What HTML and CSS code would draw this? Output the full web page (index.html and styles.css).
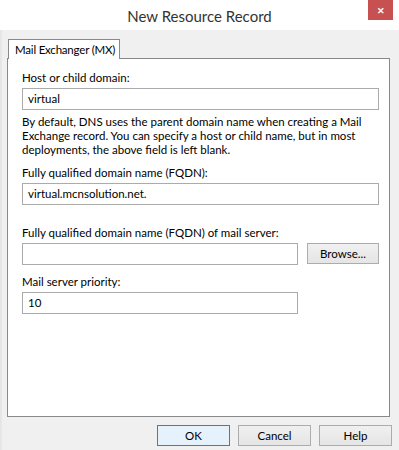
FILE: index.html
```html
<!DOCTYPE html>
<html lang="en">
    <head>
        <meta charset="UTF-8">
        <title>New Resource Record</title>
        <link rel="stylesheet" href="styles.css">
    </head>
    <body>
        <div class="window">
            <div class="titlebar">
                <span class="title">New Resource Record</span>
                <span class="close">&#x2715;</span>
            </div>

            <div class="tabs">
                <span class="tab">Mail Exchanger (MX)</span>
            </div>

            <div class="panel">
                <label class="lbl">Host or child domain:</label>
                <div class="field wide">virtual</div>

                <p class="note">By default, DNS uses the parent domain name when creating a Mail<br>Exchange record. You can specify a host or child name, but in most<br>deployments, the above field is left blank.</p>

                <label class="lbl">Fully qualified domain name (FQDN):</label>
                <div class="field wide">virtual.mcnsolution.net.</div>

                <label class="lbl gap">Fully qualified domain name (FQDN) of mail server:</label>
                <div class="row">
                    <div class="field short"></div>
                    <span class="btn browse">Browse...</span>
                </div>

                <label class="lbl">Mail server priority:</label>
                <div class="field short">10</div>
            </div>

            <div class="buttons">
                <span class="btn default">OK</span>
                <span class="btn">Cancel</span>
                <span class="btn">Help</span>
            </div>
        </div>
    </body>
</html>
```

FILE: styles.css
```css
body {
    margin: 0;
    background: #f0f0f0;
    font-family: Lato, "Liberation Sans", sans-serif;
    font-size: 11.5px;
    color: #000;
}
.window {
    width: 399px;
    height: 450px;
    display: flex;
    flex-direction: column;
    border-left: solid 2px #e6e6e6;
    box-sizing: border-box;
}
.titlebar {
    position: relative;
    height: 30px;
    flex: none;
    margin-left: -2px;
    background: #fff;
    display: flex;
    justify-content: center;
    align-items: center;
}
.title {
    font-size: 15px;
    color: #333;
    padding-top: 2px;
}
.close {
    position: absolute;
    top: 0;
    right: 6px;
    width: 25px;
    height: 20px;
    background: #c75050;
    color: #fff;
    font-size: 9px;
    font-weight: bold;
    display: flex;
    justify-content: center;
    align-items: center;
}
.tabs {
    display: flex;
    padding: 9px 0 0 6px;
}
.tab {
    width: 112px;
    height: 20px;
    box-sizing: border-box;
    background: #fff;
    border: solid 1px #898989;
    border-bottom: none;
    padding: 3px 0 0 6px;
    margin-bottom: -1px;
    position: relative;
    z-index: 1;
    white-space: nowrap;
    letter-spacing: -0.2px;
}
.panel {
    margin: 0 9px 0 5px;
    height: 359px;
    flex: none;
    box-sizing: border-box;
    background: #fff;
    border: solid 1px #898989;
    padding: 12px 0 0 14px;
    display: flex;
    flex-direction: column;
    white-space: nowrap;
}
.lbl {
    display: block;
    line-height: 14px;
    margin-bottom: 3px;
}
.lbl.gap {
    margin-top: 21px;
}
.field {
    height: 22px;
    flex: none;
    box-sizing: border-box;
    border: solid 1px #ababab;
    padding: 0 5px;
    line-height: 20px;
}
.field.wide {
    width: 357px;
}
.field.short {
    width: 276px;
}
.note {
    margin: 5px 0 9px;
    line-height: 14px;
}
.row {
    display: flex;
    gap: 9px;
    margin-bottom: 10px;
}
.btn {
    width: 73px;
    height: 21px;
    box-sizing: border-box;
    border: solid 1px #acacac;
    background: linear-gradient(#f0f0f0, #e5e5e5);
    display: flex;
    justify-content: center;
    align-items: center;
}
.btn.browse {
    width: 72px;
}
.btn.default {
    border-color: #3c7fb1;
    background: #e5f1fb;
}
.buttons {
    display: flex;
    justify-content: flex-end;
    gap: 8px;
    padding: 8px 7px 0 0;
}
```
